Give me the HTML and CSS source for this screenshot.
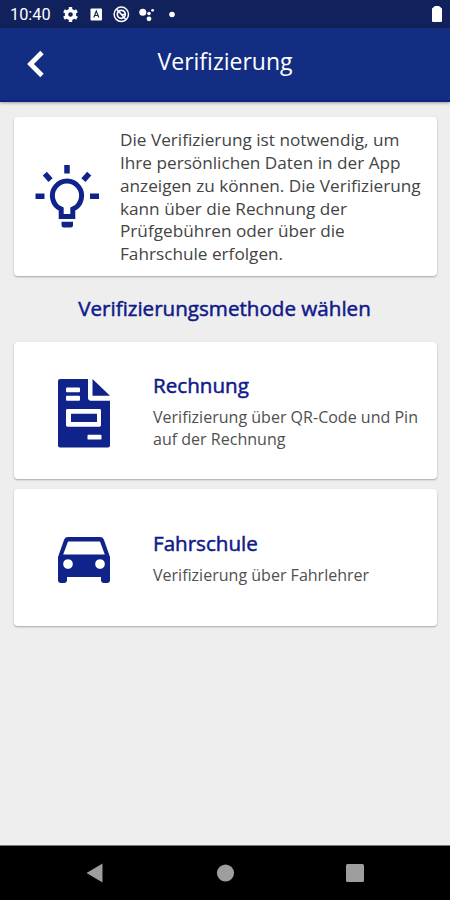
FILE: index.html
```html
<!DOCTYPE html>
<html lang="de">
<head>
<meta charset="UTF-8">
<meta name="viewport" content="width=device-width, initial-scale=1.0">
<title>Verifizierung</title>
<link rel="stylesheet" href="styles.css">
</head>
<body>

<div class="statusbar">
    <span class="time">10:40</span>
    <svg class="status-icons" width="116" height="28" viewBox="62 0 116 28">
        <!-- gear -->
        <circle cx="70.5" cy="14.5" r="4" fill="none" stroke="#fff" stroke-width="3.4"/>
        <path d="M70.5 7v3M70.5 19v3M64 10.8l2.6 1.5M74.4 16.7l2.6 1.5M64 18.2l2.6-1.5M74.4 12.3l2.6-1.5" stroke="#fff" stroke-width="3.4"/>
        <!-- keyboard -->
        <rect x="90.5" y="8.5" width="11.5" height="12" rx="1" fill="#fff"/>
        <path d="M93.8 17.5l2.5-6.5 2.5 6.5M94.8 15.5h3" fill="none" stroke="#10215c" stroke-width="1.1"/>
        <!-- sync circle -->
        <circle cx="121.3" cy="14.3" r="7.2" fill="none" stroke="#fff" stroke-width="1.5"/>
        <circle cx="121.3" cy="14.3" r="4" fill="none" stroke="#fff" stroke-width="1.7"/>
        <path d="M117 9.5l8.5 9.5M121 14.5h4" stroke="#fff" stroke-width="1.6"/>
        <!-- assistant -->
        <circle cx="142.8" cy="12.2" r="3.5" fill="#fff"/>
        <circle cx="149" cy="13.5" r="1.8" fill="#fff"/>
        <circle cx="149" cy="18.8" r="2.4" fill="#fff"/>
        <circle cx="152.6" cy="10.3" r="1.4" fill="#fff"/>
        <circle cx="172" cy="14.5" r="2.8" fill="#fff"/>
    </svg>
    <svg class="battery" width="10" height="16" viewBox="0 0 10 16">
        <path d="M3 0h4l3 2.500v12.500q0 1-1 1H1q-1 0-1-1V2.500z" fill="#fff"/>
    </svg>
</div>

<header class="toolbar">
    <svg class="back" width="18" height="28" viewBox="0 0 18 28">
        <path d="M16 2.500L4.500 14l11.500 11.500" fill="none" stroke="#fff" stroke-width="4.800"/>
    </svg>
    <h1>Verifizierung</h1>
</header>

<main>
    <section class="card info">
        <svg class="icon-bulb" width="64" height="63" viewBox="35 165 64 63">
            <g fill="none" stroke="#10238a" stroke-width="5.500">
                <path d="M67 165v8.500M35.500 196.300h9M90 196.300h9M44.800 173.700l5.800 6.500M89.200 173.700l-5.800 6.500"/>
                <path d="M61.200 216.500v-7.400a14.600 14.600 0 1 1 11.600 0v7.400z" stroke-width="5"/>
            </g>
            <path d="M61.500 221.800h11.500v3.200q0 2.500-2.500 2.500h-6.500q-2.500 0-2.500-2.500z" fill="#10238a"/>
        </svg>
        <p>Die Verifizierung ist notwendig, um Ihre persönlichen Daten in der App anzeigen zu können. Die Verifizierung kann über die Rechnung der Prüfgebühren oder über die Fahrschule erfolgen.</p>
    </section>

    <h2>Verifizierungsmethode wählen</h2>

    <a class="card method">
        <svg class="icon invoice" width="52" height="69" viewBox="0 0 52 70" preserveAspectRatio="none">
            <path d="M2 0h28v19q0 3 3 3h19v45.500q0 2-2 2H2q-2 0-2-2V2q0-2 2-2z" fill="#10238a"/>
            <path d="M34.500 0L52 17H34.500z" fill="#10238a"/>
            <g fill="#fff">
                <rect x="8" y="8.500" width="14" height="5" rx="1"/>
                <rect x="8" y="17" width="14" height="5" rx="1"/>
                <path d="M9.500 30.500h32q1.500 0 1.500 1.500v15q0 1.500-1.500 1.500h-32q-1.500 0-1.500-1.500v-15q0-1.500 1.500-1.500zM13 35.300v8.400h26v-8.400z" fill-rule="evenodd"/>
                <rect x="29.500" y="56.500" width="14" height="5" rx="1"/>
            </g>
        </svg>
        <div class="text">
            <h3>Rechnung</h3>
            <p>Verifizierung über QR-Code und Pin auf der Rechnung</p>
        </div>
    </a>

    <a class="card method">
        <svg class="icon car" width="52" height="46" viewBox="0 0 52 46">
            <path fill-rule="evenodd" fill="#10238a" d="M10 0h32q3 0 4 3l6 17v23q0 3-3 3h-3q-3 0-3-3v-3H9v3q0 3-3 3H3q-3 0-3-3V20L6 3q1-3 4-3zM10 4.500L5.200 17.500h41.600L42 4.500zM10 22.200a4.800 4.800 0 1 0 .01 0zM42 22.200a4.800 4.800 0 1 0 .01 0z"/>
        </svg>
        <div class="text">
            <h3>Fahrschule</h3>
            <p>Verifizierung über Fahrlehrer</p>
        </div>
    </a>
</main>

<nav class="navbar">
    <svg width="20" height="20" viewBox="0 0 20 20"><path d="M1.500 10L17.500 .5v19z" fill="#9e9e9e"/></svg>
    <svg width="20" height="20" viewBox="0 0 20 20"><circle cx="10.500" cy="10" r="8.600" fill="#9e9e9e"/></svg>
    <svg width="20" height="20" viewBox="0 0 20 20"><rect x="1" y="1" width="18" height="18" rx="1.500" fill="#9e9e9e"/></svg>
</nav>

</body>
</html>
```
FILE: styles.css
```css
* {
    box-sizing: border-box;
}
body {
    font-family: "Open Sans", sans-serif;
    margin: 0;
    height: 900px;
    display: flex;
    flex-direction: column;
    background-color: #eeeeee;
    overflow: hidden;
}
h1, h2, h3, p {
    margin: 0;
}
svg {
    display: block;
    flex: none;
}
.statusbar {
    display: flex;
    align-items: center;
    height: 28px;
    padding: 0 8px 0 10px;
    background-color: #10215c;
    color: #fff;
}
.time {
    width: 52px;
    font: 16.3px/28px Roboto, sans-serif;
    padding-top: 2px;
}
.battery {
    margin-left: auto;
}
.toolbar {
    display: grid;
    grid-template-columns: 26px 1fr 26px;
    align-items: center;
    height: 74px;
    padding: 0 26px;
    background-color: #132d82;
    border-bottom: 2px solid #0a2480;
    box-shadow: 0 1px 3px rgba(0, 0, 0, 0.35);
    color: #fff;
}
.toolbar h1 {
    font-size: 23px;
    font-weight: 400;
    line-height: 30px;
    text-align: center;
    padding-bottom: 6px;
}
main {
    flex: 1;
    padding: 15px 13px 0 14px;
}
.card {
    display: flex;
    align-items: center;
    background-color: #fff;
    border-radius: 4px;
    box-shadow: 0 1px 2px rgba(0, 0, 0, 0.3);
}
.info {
    height: 159px;
    padding-left: 21px;
    gap: 21px;
}
.info p {
    width: 312px;
    padding-top: 2px;
    color: #444;
    font-size: 17.2px;
    line-height: 22.9px;
}
h2 {
    height: 66px;
    line-height: 65px;
    color: #10198a;
    font-size: 20.6px;
    font-weight: 400;
    text-align: center;
    padding-right: 2px;
    -webkit-text-stroke: 0.5px #10198a;
}
.method {
    height: 137px;
    padding-left: 44px;
    gap: 43px;
    margin-bottom: 10px;
}
.method h3 {
    color: #10198a;
    font-size: 20.6px;
    font-weight: 400;
    line-height: 29px;
    -webkit-text-stroke: 0.5px #10198a;
}
.method p {
    width: 275px;
    margin-top: 6px;
    color: #505050;
    font-size: 16.05px;
    line-height: 22px;
}
.invoice {
    margin-top: 6px;
}
.car {
    margin-top: 4px;
}
.navbar {
    display: flex;
    justify-content: space-between;
    align-items: center;
    height: 55px;
    padding: 0 85px 1px;
    background-color: #000;
    border-top: 1px solid #777;
}
```
